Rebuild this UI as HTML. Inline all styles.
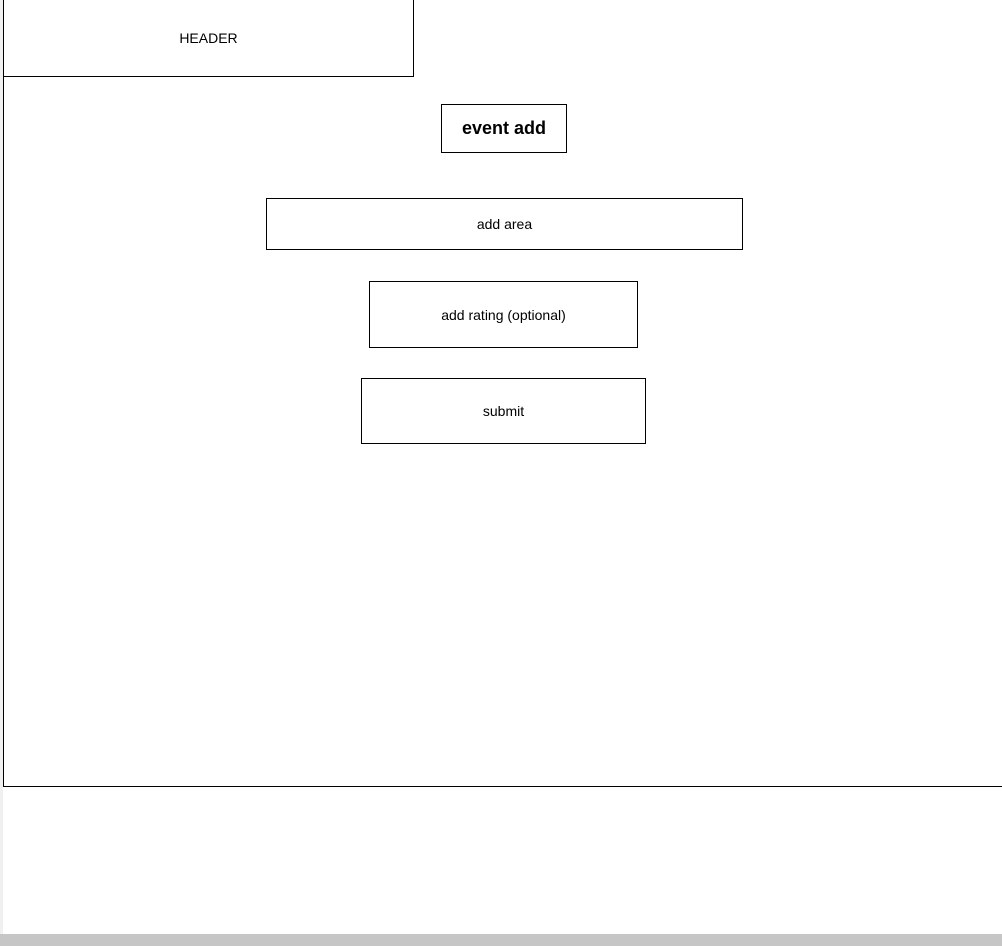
<!DOCTYPE html>
<html><head><style>
html,body{margin:0;padding:0;}
body{width:1002px;height:946px;position:relative;background:#fff;overflow:hidden;font-family:"Liberation Sans",sans-serif;color:#000;}
.b{position:absolute;box-sizing:border-box;border:1px solid #000;display:flex;align-items:center;justify-content:center;font-size:14px;}
</style></head><body>
<div style="position:absolute;left:0;top:0;width:3px;height:934px;background:#f0f0f0"></div>
<div style="position:absolute;left:0;top:934px;width:1002px;height:12px;background:#c6c6c6"></div>
<div style="position:absolute;left:3px;top:-1px;width:1010px;height:788px;box-sizing:border-box;border:1px solid #000"></div>
<div class="b" style="left:3px;top:-1px;width:411px;height:78px;">HEADER</div>
<div class="b" style="left:441px;top:104px;width:126px;height:49px;font-size:18px;font-weight:bold;">event add</div>
<div class="b" style="left:266px;top:198px;width:477px;height:52px;">add area</div>
<div class="b" style="left:369px;top:281px;width:269px;height:67px;">add rating (optional)</div>
<div class="b" style="left:361px;top:378px;width:285px;height:66px;">submit</div>
</body></html>
